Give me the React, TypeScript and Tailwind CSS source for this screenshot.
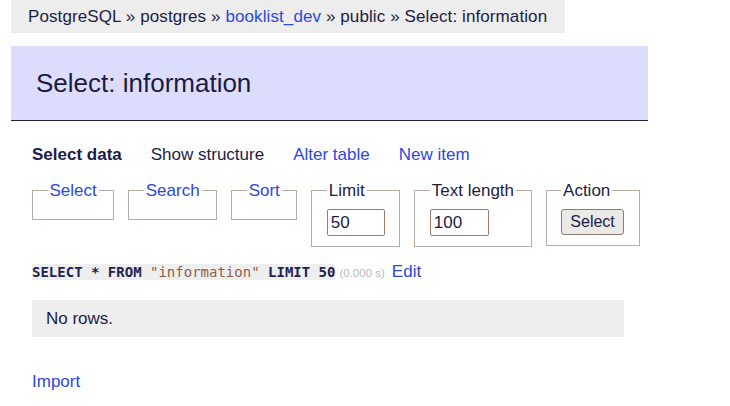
import React from 'react';

const font = { fontFamily: '"Liberation Sans", Arial, sans-serif' };

const Fieldset: React.FC<{ legend: string; link?: boolean; children?: React.ReactNode }> = ({ legend, link, children }) => {
  return <fieldset className="border border-[#b9aaa2] px-[14.5px] pt-[3px] pb-[10px] min-h-[39px]">
      <legend className={`px-[2px] text-[17px] leading-[19px] ${link ? 'text-[#2c48e0]' : 'text-[#1c1c48]'}`}>
        {legend}
      </legend>
      {children}
    </fieldset>;
};

export default function App() {
  return <div className="w-[730px] h-[406px] bg-white text-[#1c1c48] text-[17px] overflow-hidden" style={font}>
      <div className="pl-[11px]">
        <div className="flex items-center h-[33px] w-[554px] bg-[#ededed] pl-[17px] whitespace-pre tracking-[0.1px]">
          <span>PostgreSQL » postgres » </span>
          <a className="text-[#2c48e0]">booklist_dev</a>
          <span> » public » Select: information</span>
        </div>
      </div>

      <div className="mt-[13px] ml-[11px] w-[637px] h-[75px] bg-[#dcdcfd] border-b border-[#231f3c] flex items-center pl-[25px]">
        <h2 className="text-[26px] text-[#1c1c40]">Select: information</h2>
      </div>

      <div className="pl-[32px]">
        <div className="mt-[24px] flex gap-[29px] leading-[20px]">
          <span className="font-bold">Select data</span>
          <span>Show structure</span>
          <a className="text-[#2c48e0]">Alter table</a>
          <a className="text-[#2c48e0]">New item</a>
        </div>

        <div className="mt-[16px] flex items-start gap-[14px]">
          <Fieldset legend="Select" link />
          <Fieldset legend="Search" link />
          <Fieldset legend="Sort" link />
          <Fieldset legend="Limit">
            <input readOnly value="50" className="mt-[6px] w-[58px] h-[27px] border border-[#a47a66] rounded-[2px] px-[3px] text-[17px] text-[#1c1c48]" style={font} />
          </Fieldset>
          <Fieldset legend="Text length">
            <input readOnly value="100" className="mt-[6px] w-[59px] h-[27px] border border-[#a47a66] rounded-[2px] px-[3px] text-[17px] text-[#1c1c48]" style={font} />
          </Fieldset>
          <Fieldset legend="Action">
            <button className="mt-[6px] h-[26px] w-[63px] border border-[#8a7a74] rounded-[3px] bg-[#ebe9e6] text-[16px] text-[#1c1c48]" style={font}>
              Select
            </button>
          </Fieldset>
        </div>

        <div className="mt-[12px] flex items-baseline h-[18px]">
          <code className="bg-[#eeeeee] font-bold leading-[16px] text-[#222250]" style={{ fontFamily: '"DejaVu Sans Mono", monospace', fontSize: '14px' }}>
            SELECT * FROM <span className="font-normal text-[#8f5e48]">"information"</span> LIMIT 50
          </code>
          <span className="ml-[4px] text-[11.5px] text-[#b8b8c0]">(0.000 s)</span>
          <a className="ml-[7px] text-[#2c48e0]">Edit</a>
        </div>

        <div className="mt-[23px] w-[592px] h-[37px] bg-[#eeeeee] flex items-center pl-[14px]">
          No rows.
        </div>

        <div className="mt-[32px]">
          <a className="text-[#2c48e0]">Import</a>
        </div>
      </div>
    </div>;
}
